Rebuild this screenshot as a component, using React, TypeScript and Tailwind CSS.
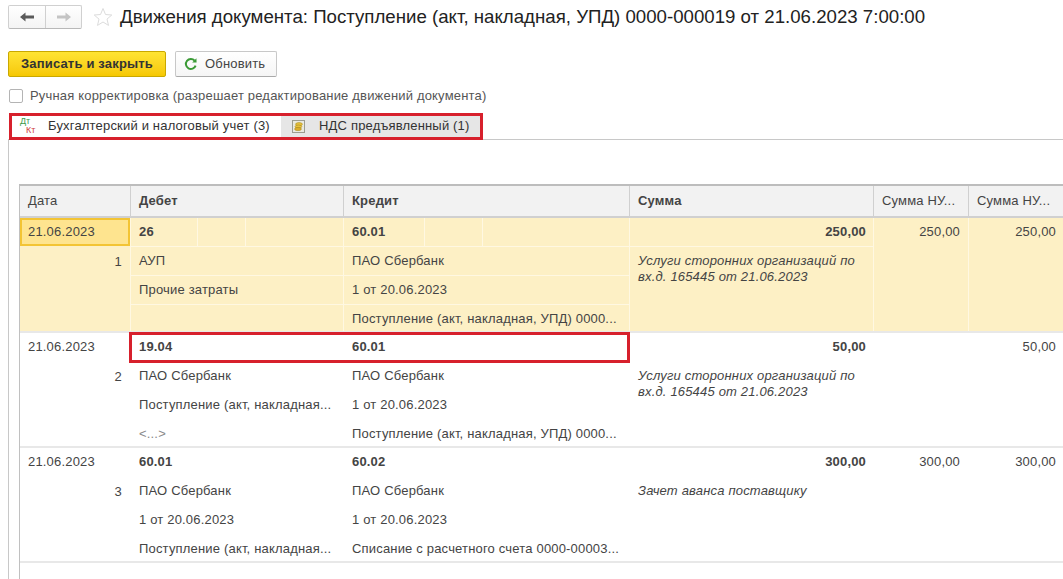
import { ReactNode } from 'react'

const COLS = ['w-[111px]', 'w-[213px]', 'w-[286px]', 'w-[244px]', 'w-[95px]', 'w-[95px]']
const SUB = ['h-[29px]', 'h-[29px]', 'h-[29px]', 'h-[28px]']

type Entry = {
  date: string
  no: number
  debit: string[]
  credit: string[]
  sum: string
  note: string
  nu1: string
  nu2: string
  active?: boolean
}

const ROWS: Entry[] = [
  {
    date: '21.06.2023', no: 1,
    debit: ['26', 'АУП', 'Прочие затраты', ''],
    credit: ['60.01', 'ПАО Сбербанк', '1 от 20.06.2023', 'Поступление (акт, накладная, УПД) 0000...'],
    sum: '250,00', note: 'Услуги сторонних организаций по вх.д. 165445 от 21.06.2023',
    nu1: '250,00', nu2: '250,00', active: true,
  },
  {
    date: '21.06.2023', no: 2,
    debit: ['19.04', 'ПАО Сбербанк', 'Поступление (акт, накладная...', '<...>'],
    credit: ['60.01', 'ПАО Сбербанк', '1 от 20.06.2023', 'Поступление (акт, накладная, УПД) 0000...'],
    sum: '50,00', note: 'Услуги сторонних организаций по вх.д. 165445 от 21.06.2023',
    nu1: '', nu2: '50,00',
  },
  {
    date: '21.06.2023', no: 3,
    debit: ['60.01', 'ПАО Сбербанк', '1 от 20.06.2023', 'Поступление (акт, накладная...'],
    credit: ['60.02', 'ПАО Сбербанк', '1 от 20.06.2023', 'Списание с расчетного счета 0000-00003...'],
    sum: '300,00', note: 'Зачет аванса поставщику',
    nu1: '300,00', nu2: '300,00',
  },
]

function HeadCell({ w, bold, children }: { w: string; bold?: boolean; children: ReactNode }) {
  return (
    <div className={`${w} shrink-0 h-full flex items-center px-2 border-r border-[#d0d0d0] whitespace-nowrap ${bold ? 'font-bold' : ''}`}>
      {children}
    </div>
  )
}

function AccountCol({ w, lines, active, splits }: { w: string; lines: string[]; active?: boolean; splits: string[] }) {
  const line = active ? 'border-[#fff8e2]' : 'border-transparent'
  return (
    <div className={`${w} shrink-0 flex flex-col border-r ${line}`}>
      {lines.map((t, i) => (
        <div key={i} className={`${SUB[i]} shrink-0 flex items-center whitespace-nowrap ${i < 3 ? `border-b ${line}` : ''} ${i === 0 ? 'font-bold' : ''}`}>
          {i === 0 ? (
            <>
              <div className={`${splits[0]} shrink-0 h-full flex items-center pl-2 border-r ${line}`}>{t}</div>
              <div className={`${splits[1]} shrink-0 h-full border-r ${line}`} />
            </>
          ) : (
            <div className={`pl-2 ${t === '<...>' ? 'text-[#8a8a8a]' : ''}`}>{t}</div>
          )}
        </div>
      ))}
    </div>
  )
}

function Row({ r }: { r: Entry }) {
  const line = r.active ? 'border-[#fff8e2]' : 'border-transparent'
  return (
    <div className={`flex h-[115px] border-b-2 border-[#e8e8e8] ${r.active ? 'bg-[#fdf0c5]' : 'bg-white'}`}>
      <div className={`${COLS[0]} shrink-0 flex flex-col border-r ${line}`}>
        <div className={`h-[28px] shrink-0 mb-px flex items-center ${r.active ? 'bg-[#fee48f] border-2 border-[#f3c434] pl-[6px]' : 'pl-2'}`}>
          {r.date}
        </div>
        <div className={`${SUB[1]} shrink-0 flex items-center justify-end pr-2`}>{r.no}</div>
      </div>
      <AccountCol w={COLS[1]} lines={r.debit} active={r.active} splits={['w-[67px]', 'w-[48px]']} />
      <AccountCol w={COLS[2]} lines={r.credit} active={r.active} splits={['w-[81px]', 'w-[58px]']} />
      <div className={`${COLS[3]} shrink-0 flex flex-col border-r ${line}`}>
        <div className={`${SUB[0]} shrink-0 flex items-center justify-end pr-[7px] font-bold border-b ${line}`}>{r.sum}</div>
        <div className="pl-2 pr-4 pt-[6px] italic leading-[16px]">{r.note}</div>
      </div>
      <div className={`${COLS[4]} shrink-0 h-full pt-[6px] pr-2 text-right leading-[15px] border-r ${line}`}>{r.nu1}</div>
      <div className={`${COLS[5]} shrink-0 h-full pt-[6px] pr-2 text-right leading-[15px]`}>{r.nu2}</div>
    </div>
  )
}

function DtKtIcon() {
  return (
    <span className="relative block w-[18px] h-[18px] shrink-0 text-[9px] leading-[8px] tracking-normal">
      <span className="absolute left-0 top-0 text-[#3c9a4a]">Дт</span>
      <span className="absolute left-[6px] top-[9px] text-[#d0423c]">Кт</span>
    </span>
  )
}

function CoinsIcon() {
  return (
    <svg width="13" height="13" viewBox="0 0 13 13" className="shrink-0">
      <rect x="0.5" y="0.5" width="12" height="12" fill="#e9e9e0" stroke="#9c9c90" />
      <ellipse cx="7" cy="4.2" rx="3.4" ry="1.6" fill="#e8c33c" stroke="#a98a1c" strokeWidth="0.6" />
      <ellipse cx="6.4" cy="6.6" rx="3.4" ry="1.6" fill="#e8c33c" stroke="#a98a1c" strokeWidth="0.6" />
      <ellipse cx="6" cy="9" rx="3.4" ry="1.6" fill="#dcae2c" stroke="#a98a1c" strokeWidth="0.6" />
    </svg>
  )
}

export default function App() {
  return (
    <div className="w-[1063px] h-[579px] overflow-hidden bg-white text-[13px] text-[#444] font-['Liberation_Sans',Arial,sans-serif] tracking-[0.18px] flex flex-col">
      {/* шапка */}
      <div className="h-[34px] pl-2 flex items-center">
        <div className="flex w-[74px] h-[24px] rounded-[2px] border border-[#d0d0d0] border-b-[#b8b8b8] bg-gradient-to-b from-white to-[#f4f4f4]">
          <div className="w-[37px] flex items-center justify-center border-r border-[#d0d0d0]">
            <svg width="14" height="10" viewBox="0 0 14 10"><path d="M0 5 L5.5 0.5 V3.6 H14 V6.4 H5.5 V9.5 Z" fill="#5a5a5a" /></svg>
          </div>
          <div className="flex-1 flex items-center justify-center">
            <svg width="14" height="10" viewBox="0 0 14 10"><path d="M14 5 L8.5 0.5 V3.6 H0 V6.4 H8.5 V9.5 Z" fill="#c4c4c4" /></svg>
          </div>
        </div>
        <svg width="20" height="20" viewBox="0 0 20 20" className="ml-[11px]">
          <path d="M10 1.5 L12.5 7.5 L18.8 8 L14 12.1 L15.5 18.4 L10 15 L4.5 18.4 L6 12.1 L1.2 8 L7.5 7.5 Z" fill="none" stroke="#dcdcdc" strokeWidth="1" />
        </svg>
        <h1 className="ml-[7px] text-[18.67px] text-[#222] font-normal whitespace-nowrap tracking-normal">
          Движения документа: Поступление (акт, накладная, УПД) 0000-000019 от 21.06.2023 7:00:00
        </h1>
      </div>

      {/* кнопки */}
      <div className="mt-[17px] pl-2 flex items-start gap-[9px]">
        <button className="w-[158px] h-[26px] rounded-[2px] border border-[#c9a800] bg-gradient-to-b from-[#ffe433] to-[#f6c800] font-bold text-[#333]">
          Записать и закрыть
        </button>
        <button className="w-[102px] h-[26px] rounded-[2px] border border-[#c8c8c8] border-b-[#aaa] bg-gradient-to-b from-white to-[#f5f5f5] flex items-center pl-2 gap-[7px]">
          <svg width="14" height="14" viewBox="0 0 14 14">
            <path d="M11.6 8.6 A5 5 0 1 1 10.6 3.6" fill="none" stroke="#3a9a35" strokeWidth="2" />
            <path d="M8.2 5.4 L12.6 5.6 L12.4 1.2 Z" fill="#3a9a35" />
          </svg>
          Обновить
        </button>
      </div>

      <label className="mt-[12px] pl-[9px] h-[14px] flex items-center gap-[7px] text-[#555]">
        <span className="w-[14px] h-[14px] rounded-[2px] border border-[#b4b4b4] bg-white" />
        Ручная корректировка (разрешает редактирование движений документа)
      </label>

      {/* вкладки */}
      <div className="relative mt-[10px] h-[27px] border-b border-[#c8c8c8] ml-2 flex items-stretch">
        <div className="w-[273px] pl-[12px] flex items-center gap-[10px] bg-white whitespace-nowrap text-[#333]">
          <DtKtIcon />
          Бухгалтерский и налоговый учет (3)
        </div>
        <div className="w-[200px] pl-[11px] flex items-center gap-[14px] bg-[#e6e6e6] whitespace-nowrap text-[#333]">
          <CoinsIcon />
          НДС предъявленный (1)
        </div>
        <div className="absolute left-[1px] top-0 w-[474px] h-[27px] border-[3px] border-[#d7202c] pointer-events-none" />
      </div>

      {/* таблица */}
      <div className="flex-1 ml-2 border-l border-[#c8c8c8] pl-[10px] pt-[44px] min-h-0">
        <div className="relative h-full border-l border-[#c0c0c0] border-t-2 border-t-[#bdbdbd]">
          <div className="flex h-[32px] bg-[#f2f2f2] border-b-2 border-[#d0d0d0]">
            <HeadCell w={COLS[0]}>Дата</HeadCell>
            <HeadCell w={COLS[1]} bold>Дебет</HeadCell>
            <HeadCell w={COLS[2]} bold>Кредит</HeadCell>
            <HeadCell w={COLS[3]} bold>Сумма</HeadCell>
            <HeadCell w={COLS[4]}>Сумма НУ...</HeadCell>
            <HeadCell w={COLS[5]}>Сумма НУ...</HeadCell>
          </div>
          {ROWS.map(r => <Row key={r.no} r={r} />)}
          <div className="absolute left-[109px] top-[146px] w-[501px] h-[31px] border-[3px] border-[#d7202c] pointer-events-none" />
        </div>
      </div>
    </div>
  )
}
